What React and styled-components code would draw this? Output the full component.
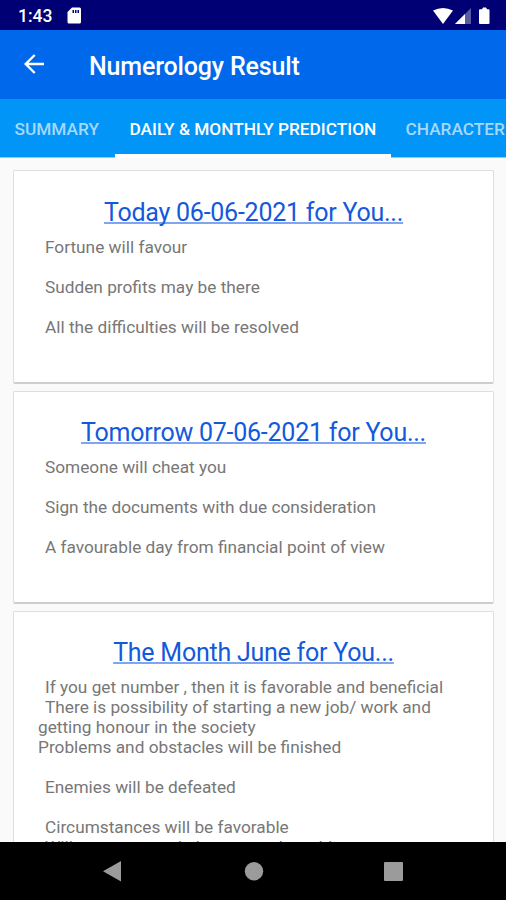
import React from "react";
import styled, { createGlobalStyle } from "styled-components";

const GlobalStyle = createGlobalStyle`
  * {
    box-sizing: border-box;
  }
  body {
    margin: 0;
    overflow: hidden;
    font-family: Roboto, sans-serif;
  }
  h1,
  h2,
  p {
    margin: 0;
    font-weight: 400;
  }
`;

const Screen = styled.div`
  width: 506px;
  height: 900px;
  display: flex;
  flex-direction: column;
  overflow: hidden;
  background-color: #fafafa;
`;

const StatusBar = styled.div`
  flex: none;
  height: 30px;
  padding: 1px 15px 0 18px;
  display: flex;
  align-items: center;
  background-color: #000074;
  color: #fff;
  svg {
    display: block;
    fill: #fff;
  }
`;

const Clock = styled.span`
  width: 49px;
  padding-top: 1px;
  font-size: 17.5px;
  font-weight: 500;
`;

const StatusIcons = styled.div`
  margin-left: auto;
`;

const AppBar = styled.header`
  flex: none;
  height: 69px;
  padding-left: 24px;
  display: flex;
  align-items: center;
  background-color: #0068eb;
  color: #fff;
  h1 {
    margin-left: 45px;
    padding-top: 3px;
    font-size: 25px;
    letter-spacing: -0.16px;
    font-weight: 500;
    white-space: nowrap;
  }
`;

const BackButton = styled.button`
  width: 20px;
  height: 20px;
  margin-bottom: 2px;
  padding: 0;
  border: 0;
  background: none;
  svg {
    display: block;
  }
`;

const TabBar = styled.nav`
  flex: none;
  height: 59px;
  display: flex;
  overflow: hidden;
  background-color: #0095f7;
`;

const Tab = styled.div`
  flex: none;
  width: ${(props) => props.$width}px;
  height: 59px;
  padding: 2px 0 0 14.5px;
  line-height: 56px;
  font-size: 17.25px;
  font-weight: 500;
  white-space: nowrap;
  color: ${(props) => (props.$active ? "#fff" : "#a6d8fc")};
  box-shadow: ${(props) =>
    props.$active ? "inset 0 -4px #fdfdfd" : "inset 0 -1px #8ccdfa"};
`;

const List = styled.main`
  flex: 1;
  min-height: 0;
  padding: 12px 12px 0 13px;
  overflow: hidden;
`;

const Card = styled.section`
  height: ${(props) => props.$height}px;
  margin-bottom: 7px;
  padding: 25px 24px 0 24px;
  border: 1px solid #dedede;
  border-bottom: 2px solid #cecece;
  border-radius: 2px;
  background-color: #fff;
  &:first-child {
    padding-top: 26px;
  }
  h2 {
    height: 40px;
    line-height: 32px;
    font-size: 25px;
    letter-spacing: -0.24px;
    text-align: center;
    white-space: nowrap;
    color: #1259dc;
    text-decoration: underline;
    text-decoration-color: #7fa4f0;
    text-decoration-thickness: 2px;
    text-underline-offset: 1px;
    text-decoration-skip-ink: none;
  }
`;

const Line = styled.p`
  height: 20px;
  padding-left: ${(props) => (props.$indent ? 7 : 0)}px;
  line-height: 20px;
  font-size: 17.25px;
  white-space: nowrap;
  color: #777;
`;

const NavBar = styled.footer`
  flex: none;
  height: 58px;
  display: flex;
  justify-content: center;
  background-color: #000;
  svg {
    display: block;
    fill: #9b9b9b;
  }
`;

const cards = [
  {
    title: "Today 06-06-2021 for You...",
    height: 214,
    lines: [
      " Fortune will favour",
      "",
      " Sudden profits may be there",
      "",
      " All the difficulties will be resolved",
    ],
  },
  {
    title: "Tomorrow 07-06-2021 for You...",
    height: 213,
    lines: [
      " Someone will cheat you",
      "",
      " Sign the documents with due consideration",
      "",
      " A favourable day from financial point of view",
    ],
  },
  {
    title: "The Month June for You...",
    height: 320,
    lines: [
      " If you get number , then it is favorable and beneficial",
      " There is possibility of starting a new job/ work and",
      "getting honour in the society",
      "Problems and obstacles will be finished",
      "",
      " Enemies will be defeated",
      "",
      " Circumstances will be favorable",
      " Will get progress in honour and wealth",
    ],
  },
];

export default function App() {
  return (
    <>
      <GlobalStyle />
      <Screen>
        <StatusBar>
          <Clock>1:43</Clock>
          <svg width="15" height="17" viewBox="0 0 15 17">
            <path
              fillRule="evenodd"
              d="M5 0.5H12.5Q14 0.5 14 2V15Q14 16.500 12.500 16.500H2Q0.500 16.500 0.500 15V5ZM5.500 3V6H7V3ZM8 3V6H9.500V3ZM10.500 3V6H12V3Z"
            />
          </svg>
          <StatusIcons>
            <svg width="58" height="18" viewBox="0 0 58 18">
              <path d="M0 3.500Q10 -1.500 20 3.500L10 17Z" />
              <path d="M38 1V17H22Z" opacity="0.35" />
              <path d="M32 7V17H22Z" />
              <path d="M47 2.200H49L50 0.500H53L54 2.200H55.500Q56.500 2.200 56.500 3.200V16Q56.500 17 55.500 17H47Q46 17 46 16V3.200Q46 2.200 47 2.200Z" />
            </svg>
          </StatusIcons>
        </StatusBar>
        <AppBar>
          <BackButton aria-label="Back">
            <svg width="20" height="20" viewBox="0 0 20 20">
              <path
                d="M20 10H2M10.700 1L1.700 10L10.700 19"
                fill="none"
                stroke="#fff"
                strokeWidth="2.400"
              />
            </svg>
          </BackButton>
          <h1>Numerology Result</h1>
        </AppBar>
        <TabBar>
          <Tab $width={115}>SUMMARY</Tab>
          <Tab $width={276} $active>
            DAILY &amp; MONTHLY PREDICTION
          </Tab>
          <Tab $width={160}>CHARACTER</Tab>
        </TabBar>
        <List>
          {cards.map((card) => (
            <Card key={card.title} $height={card.height}>
              <h2>{card.title}</h2>
              {card.lines.map((line, i) => (
                <Line key={i} $indent={line.startsWith(" ")}>
                  {line}
                </Line>
              ))}
            </Card>
          ))}
        </List>
        <NavBar>
          <svg width="506" height="58" viewBox="0 0 506 58">
            <path d="M121 19V39.500L103 29.200Z" />
            <circle cx="254" cy="29.200" r="9.200" />
            <rect x="384" y="20" width="19" height="19" rx="1" />
          </svg>
        </NavBar>
      </Screen>
    </>
  );
}
